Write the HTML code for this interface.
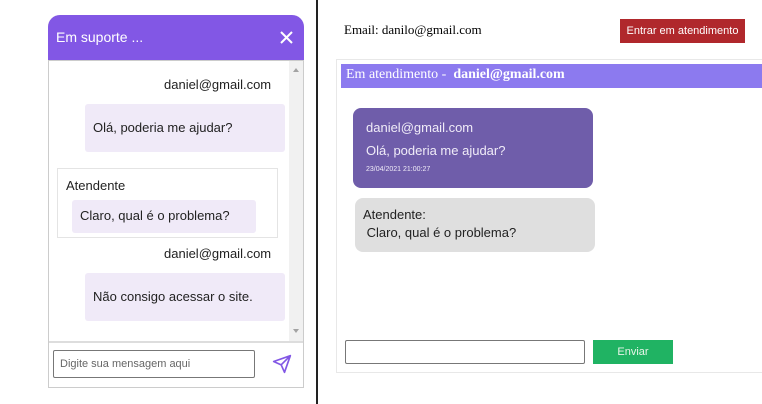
<!DOCTYPE html>
<html><head><style>
*{box-sizing:border-box;margin:0;padding:0}
body{width:762px;height:404px;background:#fff;position:relative;overflow:hidden;font-family:"Liberation Sans",Arial,sans-serif}
.a{position:absolute}
</style></head><body>
<div class="a" style="left:48px;top:15px;width:256px;height:373px;border:1px solid #ccc;border-top:none;border-radius:12px 12px 0 0;"></div>
<div class="a" style="left:48px;top:15px;width:256px;height:45px;background:#8257e5;border-radius:12px 12px 0 0;color:#fff;font-size:14px;line-height:45px;padding-left:8px">Em suporte ...</div>
<svg class="a" style="left:280px;top:31px" width="13" height="13" viewBox="0 0 13 13"><path d="M1 1L12 12M12 1L1 12" stroke="#fff" stroke-width="2"/></svg>
<div class="a" style="left:49px;top:60px;width:254px;height:1px;background:#ccc"></div>
<div class="a" style="left:289px;top:61px;width:14px;height:281px;background:#f1f1f1"></div>
<div class="a" style="left:293px;top:68px;width:0;height:0;border-left:3px solid transparent;border-right:3px solid transparent;border-bottom:4px solid #a3a3a3"></div>
<div class="a" style="left:293px;top:329px;width:0;height:0;border-left:3px solid transparent;border-right:3px solid transparent;border-top:4px solid #a3a3a3"></div>
<div class="a" style="left:164px;top:77px;font-size:13px;color:#222">daniel@gmail.com</div>
<div class="a" style="left:85px;top:104px;width:200px;height:48px;background:#f0eaf8;border-radius:3px;font-size:13px;color:#222;padding:16px 0 0 8px">Olá, poderia me ajudar?</div>
<div class="a" style="left:57px;top:168px;width:221px;height:70px;border:1px solid #e4e4e4"></div>
<div class="a" style="left:66px;top:178px;font-size:13px;color:#222">Atendente</div>
<div class="a" style="left:72px;top:200px;width:184px;height:33px;background:#f0eaf8;border-radius:3px;font-size:13px;color:#222;padding:8px 0 0 8px">Claro, qual é o problema?</div>
<div class="a" style="left:164px;top:246px;font-size:13px;color:#222">daniel@gmail.com</div>
<div class="a" style="left:85px;top:273px;width:200px;height:48px;background:#f0eaf8;border-radius:3px;font-size:13px;color:#222;padding:16px 0 0 8px">Não consigo acessar o site.</div>
<div class="a" style="left:49px;top:341px;width:254px;height:2px;background:#ddd"></div>
<div class="a" style="left:53px;top:350px;width:202px;height:28px;border:1px solid #777;border-radius:2px;font-size:11px;color:#666;padding:7px 0 0 6px">Digite sua mensagem aqui</div>
<svg class="a" style="left:272px;top:354px" width="20" height="20" viewBox="0 0 24 24"><path d="M22 2L11 13M22 2L15 22L11 13L2 9Z" fill="none" stroke="#8257e5" stroke-width="2" stroke-linejoin="round"/></svg>
<div class="a" style="left:316px;top:0;width:2px;height:404px;background:#222"></div>
<div class="a" style="left:344px;top:22px;font-family:'Liberation Serif',serif;font-size:13px;color:#000">Email: danilo@gmail.com</div>
<div class="a" style="left:620px;top:19px;width:125px;height:24px;background:#b0282c;color:#fff;font-size:11px;text-align:center;line-height:24px">Entrar em atendimento</div>
<div class="a" style="left:336px;top:59px;width:430px;height:314px;border:1px solid #e8e8e8"></div>
<div class="a" style="left:341px;top:64px;width:421px;height:24px;background:#8c7aef;color:#fff;font-family:'Liberation Serif',serif;font-size:14px;line-height:22px;padding-left:5px">Em atendimento - &nbsp;<b>daniel@gmail.com</b></div>
<div class="a" style="left:353px;top:108px;width:240px;height:80px;background:#6f5daa;border-radius:8px;color:#f0ecf8;padding:12px 0 0 13px">
<div style="font-size:13px">daniel@gmail.com</div>
<div style="font-size:13px;margin-top:8px">Olá, poderia me ajudar?</div>
<div style="font-size:7px;margin-top:8px">23/04/2021 21:00:27</div></div>
<div class="a" style="left:355px;top:198px;width:240px;height:54px;background:#dfdfdf;border-radius:8px;color:#222;font-size:13px;padding:8px 0 0 8px;line-height:18px">Atendente:<br>&nbsp;Claro, qual é o problema?</div>
<div class="a" style="left:345px;top:340px;width:240px;height:24px;border:1px solid #777;border-radius:2px"></div>
<div class="a" style="left:593px;top:340px;width:80px;height:24px;background:#20b363;color:#e8f5e8;font-size:11px;text-align:center;line-height:24px">Enviar</div>
</body></html>
